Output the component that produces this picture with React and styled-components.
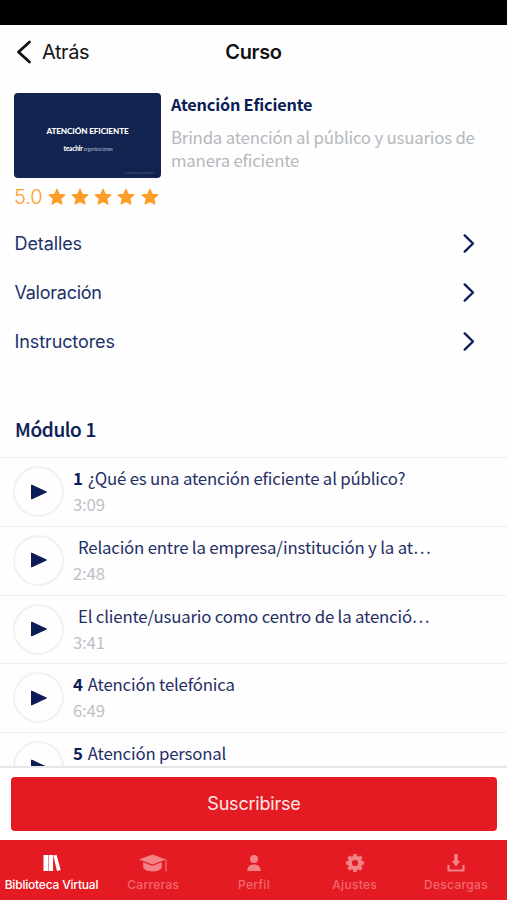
import React from 'react';
import styled, { createGlobalStyle } from 'styled-components';

const ui = 'Inter, "Liberation Sans", sans-serif';
const source = '"Noto Sans CJK SC", "Noto Sans", sans-serif';
const navy = '#0b1c56';
const red = '#e51b23';

const GlobalStyle = createGlobalStyle`
  * { box-sizing: border-box; }
  body { margin: 0; background: #fff; }
  button { border: 0; padding: 0; background: none; }
`;

const Screen = styled.div`
  width: 507px;
  height: 900px;
  display: flex;
  flex-direction: column;
  overflow: hidden;
  background: #fefefe;
  font-family: ${ui};
  color: ${navy};
  white-space: nowrap;
`;

const StatusBar = styled.div`
  height: 25px;
  flex: none;
  background: #000;
`;

const NavBar = styled.header`
  height: 68px;
  flex: none;
  display: grid;
  grid-template-columns: 1fr auto 1fr;
  align-items: start;
  padding: 14px 16px 0;
  color: #111;
`;

const BackButton = styled.button`
  display: flex;
  align-items: center;
  gap: 9px;
  height: 26px;
  font: 400 20px/26px ${ui};
  letter-spacing: -0.45px;
  color: #161616;
`;

const NavTitle = styled.h1`
  margin: 0;
  font: 600 20px/26px ${ui};
  letter-spacing: -0.35px;
`;

const Summary = styled.section`
  height: 126px;
  flex: none;
  display: flex;
  gap: 10px;
  padding-left: 14px;
`;

const Cover = styled.div`
  width: 147px;
  height: 85px;
  border-radius: 4px;
  background: #12234f;
  color: #fff;
  display: flex;
  flex-direction: column;
  align-items: center;
  padding-top: 32px;
`;

const CoverTitle = styled.div`
  font: 900 8.2px/12px Lato, sans-serif;
  letter-spacing: -0.12px;
`;

const CoverBrand = styled.div`
  margin: 8px 0 0 1px;
  font: 400 4.8px/8px Lato, sans-serif;
  letter-spacing: -0.15px;
  color: #aab2c8;
  b { font-size: 6.5px; font-weight: 900; color: #fff; }
`;

const CoverNote = styled.div`
  align-self: flex-end;
  margin: 18px 7px 0 0;
  font: 400 3px/4px Lato, sans-serif;
  color: #53618a;
`;

const Rating = styled.div`
  display: flex;
  align-items: center;
  height: 24px;
  margin-top: 7px;
  color: #fd9d28;
  font: 300 20px/24px ${ui};
  letter-spacing: -0.1px;
`;

const Stars = styled.div`
  display: flex;
  gap: 5.3px;
  margin-left: 5px;
`;

const CourseText = styled.div`
  font-family: ${source};
`;

const CourseName = styled.h2`
  margin: -1px 0 0;
  font-size: 16.3px;
  line-height: 24px;
  font-weight: 700;
  letter-spacing: -0.2px;
`;

const CourseDescription = styled.p`
  margin: 10px 0 0;
  font-size: 16.8px;
  line-height: 23px;
  letter-spacing: -0.19px;
  color: #b5b8bd;
`;

const LinkList = styled.nav`
  flex: none;
`;

const LinkRow = styled.a`
  height: 49px;
  display: flex;
  align-items: center;
  justify-content: space-between;
  padding: 0 32px 0 14.5px;
  font-size: 18px;
  letter-spacing: ${(p) => p.$spacing}px;
  color: #22306a;
`;

const ModuleTitle = styled.h2`
  margin: 0;
  height: 91px;
  flex: none;
  padding: 48px 0 0 15px;
  font: 500 19px/30px ${source};
  letter-spacing: -0.35px;
  -webkit-text-stroke: 0.2px ${navy};
`;

const LessonList = styled.div`
  flex: 1;
  min-height: 0;
  overflow: hidden;
`;

const Lesson = styled.article`
  height: 68.75px;
  display: flex;
  gap: 9px;
  border-top: 1.5px solid #eeeef0;
  padding: 8px 14px 0 13px;
`;

const Play = styled.button`
  width: 51px;
  height: 51px;
  flex: none;
  display: flex;
  align-items: center;
  justify-content: center;
  border: 2px solid #f1f1f5;
  border-radius: 50%;
`;

const LessonText = styled.div`
  margin-top: -1px;
  font-family: ${source};
`;

const LessonName = styled.div`
  height: 26px;
  font-size: 16.8px;
  line-height: 26px;
  letter-spacing: -0.18px;
  padding-left: ${(p) => (p.$unnumbered ? 5 : 0)}px;
  color: #252f66;
  b { margin-right: 5px; color: ${navy}; }
`;

const Duration = styled.div`
  font-size: 16.8px;
  line-height: 27px;
  letter-spacing: -0.2px;
  color: #bec0c5;
`;

const SubscribeBar = styled.div`
  height: 74px;
  flex: none;
  border-top: 2px solid #e7e7e8;
  padding: 9px 10px 0 11px;
  background: #fff;
`;

const SubscribeButton = styled.button`
  width: 100%;
  height: 54px;
  border-radius: 4px;
  background: ${red};
  color: #ffe9e8;
  font: 400 18px/54px ${ui};
  letter-spacing: -0.2px;
`;

const TabBar = styled.nav`
  height: 60px;
  flex: none;
  display: grid;
  grid-template-columns: 103px repeat(3, 1fr) 102px;
  background: ${red};
`;

const Tab = styled.a`
  display: flex;
  flex-direction: column;
  align-items: center;
  padding-top: 13px;
  color: ${(p) => (p.$active ? '#fff' : '#f0696e')};
  font-size: 12px;
  line-height: 16px;
  font-weight: 500;
  letter-spacing: ${(p) => p.$spacing}px;
  svg { height: 20px; margin-bottom: 4px; display: block; color: ${(p) => (p.$active ? '#fff' : '#f28286')}; }
`;

const Star = () => (
  <svg width="18" height="18" viewBox="0 0 24 24" fill="currentColor" stroke="currentColor" strokeWidth="1.5" strokeLinejoin="round">
    <path d="M12 1.5l3.1 6.8 7.4.9-5.5 5 1.5 7.3L12 17.900l-6.500 3.600L7 14.200l-5.500-5 7.400-.9z" />
  </svg>
);

const Chevron = () => (
  <svg width="12" height="20" viewBox="0 0 12 20" fill="none" stroke={navy} strokeWidth="2.3" strokeLinecap="round" strokeLinejoin="round">
    <path d="M1.700 1.400L10 9.500l-8.300 8.100" />
  </svg>
);

const icons = {
  books: (
    <svg width="18" viewBox="0 0 18 20" fill="currentColor">
      <path d="M.5 2h4.500v16H.5zM5.500 2h4.600v16H5.500zM10.300 2.500l3.300-.8 4.100 15.300-3.700 1z" />
    </svg>
  ),
  cap: (
    <svg width="30" viewBox="0 0 30 20" fill="currentColor">
      <path d="M1 6.500L14.500 1.500 28 6.500 14.500 11.500zM5.200 9.300l9.300 3.500 9.300-3.500v5.500c-2.600 4.900-16 4.900-18.600 0z" />
      <path d="M28 6.500v12" fill="none" stroke="currentColor" strokeWidth="1" />
    </svg>
  ),
  person: (
    <svg width="18" viewBox="0 0 18 20" fill="currentColor">
      <circle cx="9" cy="6" r="4" />
      <path d="M2.300 18c0-4.500 2.700-6.500 6.700-6.500s6.700 2 6.700 6.500z" />
    </svg>
  ),
  gear: (
    <svg width="20" viewBox="0 0 20 20" fill="none" stroke="currentColor">
      <circle cx="10" cy="10" r="5.200" strokeWidth="4.200" />
      <path d="M10 1v3M10 16v3M1 10h3M16 10h3M3.600 3.600l2.200 2.200M14.200 14.200l2.200 2.200M3.600 16.400l2.200-2.200M14.200 5.800l2.200-2.200" strokeWidth="3.600" />
    </svg>
  ),
  download: (
    <svg width="20" viewBox="0 0 20 20" fill="currentColor">
      <path d="M8.200 1h3.600v7H14.500L10 13.500 5.500 8h2.700z" />
      <path d="M2.500 12v5.500h15V12" fill="none" stroke="currentColor" strokeWidth="2.200" />
    </svg>
  ),
};

const links = [['Detalles', -0.1], ['Valoración', -0.25], ['Instructores', -0.1]];
const lessons = [
  { number: 1, name: '¿Qué es una atención eficiente al público?', time: '3:09' },
  { name: 'Relación entre la empresa/institución y la at…', time: '2:48' },
  { name: 'El cliente/usuario como centro de la atenció…', time: '3:41' },
  { number: 4, name: 'Atención telefónica', time: '6:49' },
  { number: 5, name: 'Atención personal' },
];
const tabs = [
  { icon: 'books', label: 'Biblioteca Virtual', active: true, spacing: -0.2 },
  { icon: 'cap', label: 'Carreras', spacing: 0.3 },
  { icon: 'person', label: 'Perfil', spacing: 0.3 },
  { icon: 'gear', label: 'Ajustes', spacing: 0.3 },
  { icon: 'download', label: 'Descargas', spacing: 0.3 },
];

export default function App() {
  return (
    <Screen>
      <GlobalStyle />
      <StatusBar />
      <NavBar>
        <BackButton>
          <svg width="17" height="24" viewBox="0 0 17 24" fill="none" stroke="#111" strokeWidth="2.800" strokeLinecap="round" strokeLinejoin="round">
            <path d="M13.500 2L2.500 12 13.500 22" />
          </svg>
          Atrás
        </BackButton>
        <NavTitle>Curso</NavTitle>
      </NavBar>
      <Summary>
        <div>
          <Cover>
            <CoverTitle>ATENCIÓN EFICIENTE</CoverTitle>
            <CoverBrand><b>teachlr</b> organizaciones</CoverBrand>
            <CoverNote>teachlr organizaciones</CoverNote>
          </Cover>
          <Rating>
            5.0
            <Stars>{[1, 2, 3, 4, 5].map((n) => <Star key={n} />)}</Stars>
          </Rating>
        </div>
        <CourseText>
          <CourseName>Atención Eficiente</CourseName>
          <CourseDescription>
            Brinda atención al público y usuarios de<br />manera eficiente
          </CourseDescription>
        </CourseText>
      </Summary>
      <LinkList>
        {links.map(([label, spacing]) => (
          <LinkRow key={label} $spacing={spacing}>{label}<Chevron /></LinkRow>
        ))}
      </LinkList>
      <ModuleTitle>Módulo 1</ModuleTitle>
      <LessonList>
        {lessons.map((lesson) => (
          <Lesson key={lesson.name}>
            <Play>
              <svg width="18" height="16" viewBox="0 0 18 16" fill={navy} stroke={navy} strokeLinejoin="round">
                <path d="M1.500 1L16.500 8l-15 7z" />
              </svg>
            </Play>
            <LessonText>
              <LessonName $unnumbered={!lesson.number}>
                {lesson.number && <b>{lesson.number}</b>}
                {lesson.name}
              </LessonName>
              {lesson.time && <Duration>{lesson.time}</Duration>}
            </LessonText>
          </Lesson>
        ))}
      </LessonList>
      <SubscribeBar>
        <SubscribeButton>Suscribirse</SubscribeButton>
      </SubscribeBar>
      <TabBar>
        {tabs.map((tab) => (
          <Tab key={tab.label} $active={tab.active} $spacing={tab.spacing}>
            {icons[tab.icon]}
            {tab.label}
          </Tab>
        ))}
      </TabBar>
    </Screen>
  );
}
